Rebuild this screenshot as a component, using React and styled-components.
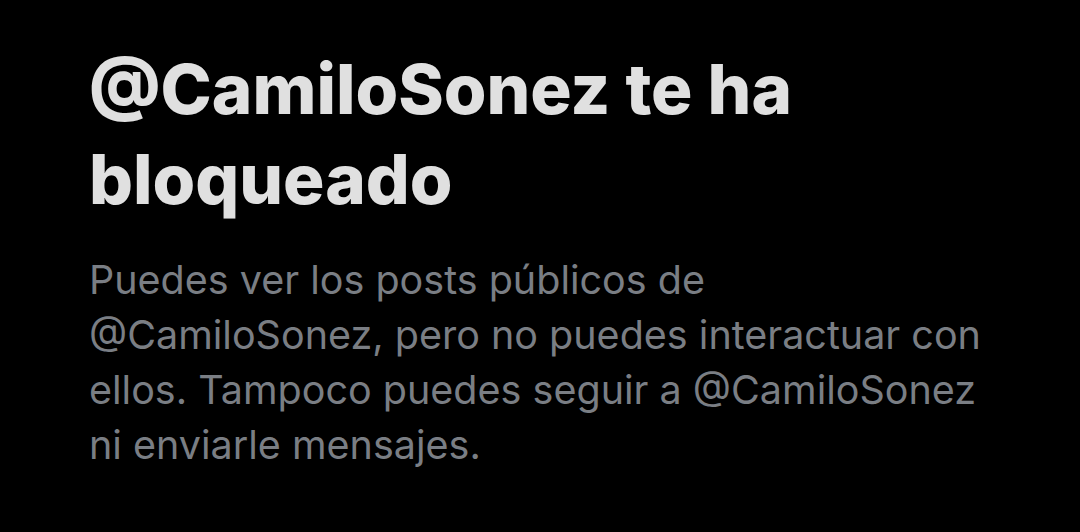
import React from 'react';
import styled, {createGlobalStyle} from 'styled-components';

const GlobalStyle = createGlobalStyle`
    html, body {
        margin: 0;
        padding: 0;
        background-color: #000000;
    }
`;

const Page = styled.div`
    width: 1080px;
    height: 532px;
    background-color: #000000;
    box-sizing: border-box;
    padding: 44px 90px 0 89px;
    display: flex;
    flex-direction: column;
    gap: 29px;
    overflow: hidden;
`;

const Title = styled.h1`
    margin: 0;
    font-family: Inter, "Liberation Sans", sans-serif;
    font-weight: 800;
    font-size: 69px;
    line-height: 90px;
    color: #e0e0e0;
`;

const Message = styled.p`
    margin: 0;
    font-family: Inter, "Liberation Sans", sans-serif;
    font-weight: 400;
    font-size: 39.5px;
    line-height: 55px;
    color: #7a7e84;
`;

const App = () => {
    return (
        <Page>
            <GlobalStyle/>
            <Title>
                @CamiloSonez te ha<br/>bloqueado
            </Title>
            <Message>
                Puedes ver los posts públicos de<br/>
                @CamiloSonez, pero no puedes interactuar con<br/>
                ellos. Tampoco puedes seguir a @CamiloSonez<br/>
                ni enviarle mensajes.
            </Message>
        </Page>
    )
};

export default App
